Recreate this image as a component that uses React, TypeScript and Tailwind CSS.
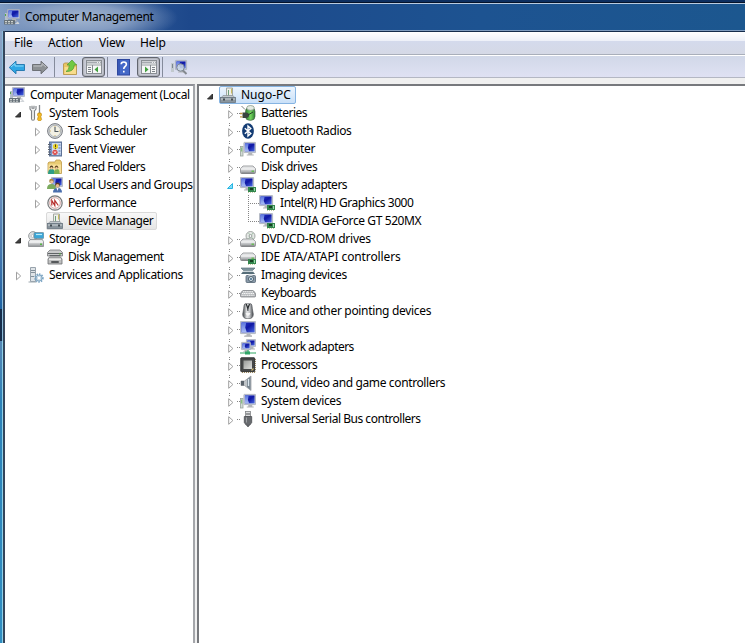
import React from "react";

type IconName =
  | "computer" | "tools" | "clock" | "event" | "folders" | "users" | "perf" | "device"
  | "storage" | "disk" | "services" | "battery" | "bluetooth" | "pc" | "drive" | "display"
  | "dvd" | "ide" | "imaging" | "keyboard" | "mouse" | "monitor" | "network" | "cpu"
  | "sound" | "usb";

function Gradients() {
  return (
    <svg className="absolute h-0 w-0">
      <defs>
        <linearGradient id="screen" x1="0" y1="0" x2="1" y2="1">
          <stop offset="0" stopColor="#2135c8" />
          <stop offset=".5" stopColor="#1018a4" />
          <stop offset="1" stopColor="#4a6be4" />
        </linearGradient>
        <linearGradient id="glare" x1="0" y1="0" x2="0" y2="1">
          <stop offset="0" stopColor="#5a74de" />
          <stop offset="1" stopColor="#a9bcf4" />
        </linearGradient>
        <linearGradient id="metal" x1="0" y1="0" x2="0" y2="1">
          <stop offset="0" stopColor="#eeeff0" />
          <stop offset=".5" stopColor="#cfd1d3" />
          <stop offset="1" stopColor="#909396" />
        </linearGradient>
        <linearGradient id="steel" x1="0" y1="0" x2="1" y2="0">
          <stop offset="0" stopColor="#3f4448" />
          <stop offset=".4" stopColor="#e8e9ea" />
          <stop offset=".65" stopColor="#c3c5c8" />
          <stop offset="1" stopColor="#44484c" />
        </linearGradient>
        <linearGradient id="die" x1="0" y1="0" x2="1" y2="1">
          <stop offset="0" stopColor="#989a98" />
          <stop offset="1" stopColor="#dedfdc" />
        </linearGradient>
        <linearGradient id="cell" x1="0" y1="0" x2="1" y2="0">
          <stop offset="0" stopColor="#2e8230" />
          <stop offset=".55" stopColor="#74d65e" />
          <stop offset="1" stopColor="#2b7b31" />
        </linearGradient>
      </defs>
    </svg>
  );
}

function Screen({ x = 0, y = 0, w = 13, h = 10 }: { x?: number; y?: number; w?: number; h?: number }) {
  return (
    <g>
      <rect x={x + 0.4} y={y + 0.4} width={w - 0.8} height={h - 0.8} rx=".5" fill="#d3d8e0" stroke="#a3a9b6" strokeWidth=".8" />
      <rect x={x + 1.4} y={y + 1.4} width={w - 2.8} height={h - 3} fill="url(#screen)" />
      <path d={`M${x + 1.4} ${y + 1.4}h${w * 0.3}l${-w * 0.06} ${h * 0.4}l${w * 0.1} ${h * 0.6 - 3}h${-w * 0.34}z`} fill="url(#glare)" />
      <path d={`M${x + w / 2 - 1.5} ${y + h}h4v1.500h1.500v1h-7v-1h1.500z`} fill="#b3b5b8" />
    </g>
  );
}

function Chip() {
  return (
    <g>
      <rect x="8" y="10" width="8" height="5" fill="#33864d" />
      <rect x="10" y="11" width="3" height="2" fill="#163f22" />
      <path d="M8 15.500h7" stroke="#c3cba6" strokeDasharray="1 1" />
      <path d="M14.500 11v3" stroke="#9fd9ab" />
    </g>
  );
}

function Drive({ y = 7 }: { y?: number }) {
  return (
    <g>
      <path d={`M3 ${y}h10l2.500 2.700v3.800q0 1-1 1h-13q-1 0-1-1v-3.800z`} fill="url(#metal)" stroke="#8b8d90" strokeWidth=".8" />
      <path d={`M1 ${y + 3}h14`} stroke="#fbfbfb" />
      <path d={`M1.500 ${y + 7.2}h13`} stroke="#7c7e80" />
      <rect x="11.500" y={y + 4.500} width="2.500" height="1.500" fill="#6aba58" />
    </g>
  );
}

function Icon({ name }: { name: IconName }) {
  const art: Record<IconName, React.ReactNode> = {
    computer: (
      <>
        <rect x="1" y="4" width="3" height="7" fill="#b5c0cb" />
        <path d="M1.500 5v2" stroke="#58a847" />
        <Screen x={3} y={0} w={13} h={10} />
        <rect x="0" y="11" width="11" height="4.500" rx=".5" fill="#68727a" />
        <path d="M1 12.500h9M1 14.200h9" stroke="#cdd3d0" strokeDasharray="2 1" />
        <path d="M11 14.500l3-2 1.500 2.500h-4z" fill="#d1d5d9" />
      </>
    ),
    tools: (
      <>
        <path d="M2 1v3l1.500 2v7.500q0 1.800 1.500 1.800t1.500-1.800V6L8 4V1M4 .8v2.500h2V.8" fill="none" stroke="#7d8185" strokeWidth="1.100" />
        <path d="M4.200 4.500h1.600v9H4.200z" fill="#dfe1e2" />
        <path d="M11.500 0v8" stroke="#85898c" strokeWidth="1.300" />
        <path d="M10 8h3l.6 2-.8 1.500.8 3-1 1.200h-2.200l-1-1.200.8-3-.8-1.500z" fill="#f5bb25" stroke="#b5820d" strokeWidth=".6" />
      </>
    ),
    clock: (
      <>
        <circle cx="8" cy="8" r="7.400" fill="#d6d7d8" stroke="#787c82" strokeWidth="1" />
        <circle cx="8" cy="8" r="5.700" fill="#f3f1e4" stroke="#a5adb5" strokeWidth=".8" />
        <path d="M8 4V8.500h3.500" stroke="#4e5860" fill="none" strokeWidth="1.100" />
        <path d="M8 2.800v1M8 12.200v1M2.800 8h1M12.200 8h1" stroke="#c9a75c" />
      </>
    ),
    event: (
      <>
        <rect x="2.500" y="1" width="12" height="14" fill="#7695c4" stroke="#5e7295" />
        <rect x="5" y="2" width="9" height="12" fill="#ccdaf0" />
        <path d="M1 3.500h3M1 6h3M1 8.500h3M1 11h3M1 13.500h3" stroke="#59616f" />
        <path d="M8.500 2.500l2.500 1.500v3l-2.500 1.500L6 7V4z" fill="#e7d32f" />
        <path d="M8.500 3.500v2.500M8.500 6.800v1" stroke="#57430f" />
        <circle cx="8" cy="11.300" r="2.600" fill="#db4a48" />
        <path d="M7 10.300l2 2M9 10.300l-2 2" stroke="white" strokeWidth=".8" />
        <path d="M11.500 4h2M11.500 7h2M11.500 10h2M11.500 13h2" stroke="#5674af" />
      </>
    ),
    folders: (
      <>
        <path d="M1 4l1-1h6l1-2h4l1.500 2v11.500H1z" fill="#e9cc74" stroke="#bf9b49" strokeWidth=".8" />
        <path d="M1.500 5.500h12.500v8.500h-12.500z" fill="#f8e09a" />
        <circle cx="4.500" cy="8.200" r="1.700" fill="#553f24" />
        <circle cx="9.500" cy="8.200" r="1.700" fill="#684c25" />
        <path d="M1 15q0-5 3.500-5t3.500 5z" fill="#2e9c86" />
        <path d="M7 15q0-5 3-5t2.500 5z" fill="#7fb050" />
        <circle cx="4.500" cy="9.200" r="1.200" fill="#efc79b" />
        <circle cx="9.500" cy="9.200" r="1.200" fill="#efc79b" />
      </>
    ),
    users: (
      <>
        <Screen x={4} y={0} w={12} h={10} />
        <circle cx="4.500" cy="4" r="2.300" fill="#a98344" />
        <circle cx="4.700" cy="5" r="1.600" fill="#efc79d" />
        <path d="M0 12q0-5 4.500-5t4.500 5z" fill="#7cab5e" />
        <circle cx="10.500" cy="7.800" r="2.400" fill="#593b29" />
        <circle cx="10.500" cy="8.800" r="1.700" fill="#e7b98d" />
        <path d="M6 15.500q0-4.500 4.500-4.500t4.500 4.500z" fill="#4b6fae" />
        <path d="M9.500 11l1 3 1-3" fill="white" />
      </>
    ),
    perf: (
      <>
        <circle cx="8" cy="8" r="7.200" fill="#f1eeee" stroke="#77797b" strokeWidth="1.200" />
        <circle cx="8" cy="8" r="5.300" fill="white" stroke="#cc9794" strokeWidth=".8" />
        <path d="M4.800 10.500V5.500l3 5V5.500l3.500 5" stroke="#b62e2c" fill="none" strokeWidth="1.200" />
      </>
    ),
    device: (
      <>
        <path d="M6.500 1h6v8h-6z" fill="#efefea" stroke="#a2a7a1" />
        <path d="M8.500 3v6" stroke="#6e9f7c" />
        <path d="M11.500 1.500v5" stroke="#cbbd62" />
        <path d="M3 8.500h10l2 2.500H1z" fill="#c3c9cd" stroke="#8b939a" strokeWidth=".7" />
        <rect x=".5" y="10.500" width="15" height="5" fill="#8a959d" stroke="#697580" strokeWidth=".8" />
        <path d="M1 12h14" stroke="#cdd4d8" />
        <rect x="3" y="11.500" width="2" height="2" fill="#454e55" />
        <rect x="11" y="11.500" width="2" height="2" fill="#454e55" />
      </>
    ),
    storage: (
      <>
        <circle cx="5" cy="5" r="4.400" fill="#dddfe0" stroke="#94989b" strokeWidth=".9" />
        <circle cx="4.500" cy="5" r="1.400" fill="white" stroke="#a4a8ab" strokeWidth=".6" />
        <rect x="6" y="1.500" width="9.800" height="6" rx="1" fill="#3ba5d6" stroke="#6e8794" strokeWidth=".7" />
        <path d="M8 3.500h6" stroke="#b9ecfa" strokeWidth="1.200" />
        <path d="M2 8.500h12.500l1 2.500v4.500H.5V11z" fill="url(#metal)" stroke="#868a8e" strokeWidth=".8" />
        <path d="M1 11h14" stroke="white" />
        <rect x="12" y="12.500" width="2" height="1.500" fill="#57b544" />
      </>
    ),
    disk: (
      <>
        <path d="M3 1h10l2.500 2.500V7h-15V3.500z" fill="#c9cacb" stroke="#77797b" strokeWidth=".8" />
        <path d="M1 4.500h14M2.500 6.500h11" stroke="#606467" />
        <path d="M2.500 8h11l1.500 2v5H1v-5z" fill="#bebfbf" stroke="#6d7072" strokeWidth=".8" />
        <path d="M2 10.200h12" stroke="white" />
        <rect x="4" y="12" width="8" height="2" rx="1" fill="#56595b" />
        <path d="M12 5h2" stroke="#58af46" />
      </>
    ),
    services: (
      <>
        <path d="M2.500.500h5v14h-5z" fill="#dfe4e8" stroke="#98a3ac" />
        <path d="M3 3.500h4M3 5.500h4M3 9.500h3" stroke="#84919b" />
        <path d="M.5 15h8" stroke="#9ca7ae" />
        <circle cx="11" cy="11" r="3.800" fill="none" stroke="#7ba5c4" strokeWidth="1.800" strokeDasharray="1.500 1" />
        <circle cx="11" cy="11" r="3" fill="#c9dbe8" stroke="#779fbc" strokeWidth=".8" />
        <circle cx="11" cy="11" r="1.200" fill="white" />
      </>
    ),
    battery: (
      <>
        <rect x="5.500" y="2.500" width="9.500" height="12.800" rx="4" fill="url(#cell)" stroke="#47664b" strokeWidth=".7" />
        <ellipse cx="10.500" cy="2.900" rx="3.800" ry="2.400" fill="#e4ece2" stroke="#7d8f80" strokeWidth=".7" />
        <path d="M2.500 7.500h3.500q3 0 3 2.700t-3 2.800h-3.500z" fill="#3a443f" />
        <path d="M0 8.500h2.500M0 11.800h2.500" stroke="#c09a46" strokeWidth="1.300" />
        <path d="M1.500 1l3.500 3.500" stroke="#7b827f" />
        <path d="M8 10l5-3" stroke="#273c2b" />
      </>
    ),
    bluetooth: (
      <>
        <ellipse cx="8" cy="8" rx="5.900" ry="7.800" fill="#143c74" />
        <path d="M4.800 5.300l6 5.300L8 13V3l2.800 2.400-6 5.300" stroke="white" fill="none" strokeWidth="1.400" />
      </>
    ),
    pc: (
      <>
        <rect x=".5" y="5.500" width="2.500" height="9.500" fill="#d3dbd6" stroke="#98a39d" strokeWidth=".8" />
        <path d="M1.700 6.500v4" stroke="#76bd6d" />
        <Screen x={3.5} y={1} w={12.500} h={11} />
      </>
    ),
    drive: <Drive />,
    display: (
      <>
        <Screen x={0} y={0} w={14} h={11} />
        <Chip />
      </>
    ),
    dvd: (
      <>
        <circle cx="10.500" cy="5" r="4.500" fill="#e4e8e5" stroke="#8e9491" strokeWidth=".8" />
        <path d="M8.500 2l4.500 6M13 2l-4.500 6" stroke="#96bd9c" strokeWidth=".8" />
        <circle cx="10.500" cy="5" r="1.400" fill="white" stroke="#7d8382" strokeWidth=".7" />
        <Drive y={8} />
      </>
    ),
    ide: (
      <>
        <Drive y={4} />
        <Chip />
      </>
    ),
    imaging: (
      <>
        <path d="M1 1h14l-3 3H4z" fill="#7d929c" stroke="#60747e" strokeWidth=".7" />
        <path d="M3 4.500h10l2 2.500H1z" fill="#566d78" />
        <path d="M3 4.300h10" stroke="#dbe3e7" />
        <rect x="6" y="8.500" width="9.500" height="7" rx="1" fill="#8b9baa" stroke="#566675" strokeWidth=".8" />
        <path d="M8.500 7.500h4v2h-4z" fill="#c3cdd4" />
        <circle cx="11" cy="12" r="2.500" fill="#dce8f0" stroke="#40515f" strokeWidth=".9" />
        <circle cx="11" cy="12" r="1" fill="#3e6685" />
      </>
    ),
    keyboard: (
      <>
        <path d="M3 5.500h10q3 1.500 2.700 5.500-.2 1-1.200 1h-13q-1 0-1.200-1Q0 7 3 5.500z" fill="#b1b4b7" stroke="#787b7f" strokeWidth=".7" />
        <path d="M3 6.800h10M2 8.500h12M1.500 10.200h13" stroke="#f7f7f7" strokeWidth="1.100" strokeDasharray="1.300 .5" />
      </>
    ),
    mouse: (
      <>
        <path d="M5 .8h6q1 0 1.300 5l1 5.500q0 4.500-5.300 4.500t-5.300-4.500l1-5.500Q4 .8 5 .8z" fill="url(#steel)" stroke="#54585c" strokeWidth=".7" />
        <path d="M6.300 1l1.500 4.500L9.500 1" fill="#dfe2e3" stroke="#25292c" strokeWidth="1.200" />
        <path d="M7.900 5v3" stroke="#3c4145" />
        <path d="M5.500 10q2.500 6 5 0" fill="#f6f6f6" />
      </>
    ),
    monitor: (
      <>
        <Screen x={0} y={0} w={16} h={13} />
        <path d="M4 15.200h8" stroke="#b1b3b6" />
      </>
    ),
    network: (
      <>
        <Screen x={6} y={0} w={10} h={8} />
        <Screen x={1} y={3} w={10} h={8} />
        <path d="M8 11v3" stroke="#55bb84" strokeWidth="1.500" />
        <path d="M0 14h16" stroke="#8ccfa9" strokeWidth="1.800" />
        <rect x="5" y="12.500" width="5" height="3" fill="#2fa567" />
      </>
    ),
    cpu: (
      <>
        <path d="M15.300 2v12.500M2 15.500h13" stroke="#a38d61" strokeWidth="1.300" strokeDasharray="1 1" />
        <rect x=".8" y=".8" width="13.800" height="13.800" rx=".5" fill="#454748" stroke="#333536" />
        <rect x="3.500" y="3.500" width="8.500" height="8.500" fill="url(#die)" />
        <path d="M11.500 13.500l2-2" stroke="#c5b16f" strokeWidth="1.200" />
      </>
    ),
    sound: (
      <>
        <path d="M1 6h3.500L11 1v14.500L4.500 10.500H1z" fill="#bfc4c8" stroke="#92979b" strokeWidth=".7" />
        <path d="M1 6h3v4.500H1z" fill="#5a636b" />
        <path d="M7 4.500v7.500l3.500 3V1.500z" fill="#788590" />
        <path d="M8.500 4v7" stroke="#dbe6ee" strokeWidth="1.300" />
      </>
    ),
    usb: (
      <>
        <rect x="5.500" y=".5" width="5" height="5" fill="#dcddde" stroke="#808386" strokeWidth=".8" />
        <path d="M7 2v2M9 2v2" stroke="#424548" strokeWidth=".9" />
        <path d="M4.300 5.500h7.400v6l-2 2.800H6.300l-2-2.800z" fill="#686b6f" stroke="#4b4e52" strokeWidth=".8" />
        <path d="M6.500 6.500v5" stroke="#9fa2a5" />
        <path d="M8 14v2" stroke="#55585c" strokeWidth="1.600" />
      </>
    ),
  };
  return (
    <svg className="h-4 w-4 shrink-0" viewBox="0 0 16 16">
      {art[name]}
    </svg>
  );
}

function Arrow({ open }: { open?: boolean }) {
  return (
    <svg className="h-2.5 w-2.5 shrink-0" viewBox="0 0 10 10">
      {open ? (
        <path d="M6.500 3v5H1.500z" fill="#404040" stroke="#262626" strokeWidth=".9" />
      ) : (
        <path d="M2.500 1.200v7.600L6.700 5z" fill="white" stroke="#a0a0a0" />
      )}
    </svg>
  );
}

interface Node {
  label: string;
  icon: IconName;
  level: number;
  state?: "open" | "closed";
  tracking: string;
}

const leftNodes: Node[] = [
  { label: "Computer Management (Local", icon: "computer", level: 0, tracking: "tracking-[-0.46px]" },
  { label: "System Tools", icon: "tools", level: 1, state: "open", tracking: "tracking-[-0.27px]" },
  { label: "Task Scheduler", icon: "clock", level: 2, state: "closed", tracking: "tracking-[-0.36px]" },
  { label: "Event Viewer", icon: "event", level: 2, state: "closed", tracking: "tracking-[-0.44px]" },
  { label: "Shared Folders", icon: "folders", level: 2, state: "closed", tracking: "tracking-[-0.5px]" },
  { label: "Local Users and Groups", icon: "users", level: 2, state: "closed", tracking: "tracking-[-0.4px]" },
  { label: "Performance", icon: "perf", level: 2, state: "closed", tracking: "tracking-[-0.45px]" },
  { label: "Device Manager", icon: "device", level: 2, tracking: "tracking-[-0.4px]" },
  { label: "Storage", icon: "storage", level: 1, state: "open", tracking: "tracking-[-0.4px]" },
  { label: "Disk Management", icon: "disk", level: 2, tracking: "tracking-[-0.47px]" },
  { label: "Services and Applications", icon: "services", level: 1, state: "closed", tracking: "tracking-[-0.34px]" },
];

const rightNodes: Node[] = [
  { label: "Batteries", icon: "battery", level: 1, state: "closed", tracking: "tracking-[-0.5px]" },
  { label: "Bluetooth Radios", icon: "bluetooth", level: 1, state: "closed", tracking: "tracking-[-0.38px]" },
  { label: "Computer", icon: "pc", level: 1, state: "closed", tracking: "tracking-[-0.35px]" },
  { label: "Disk drives", icon: "drive", level: 1, state: "closed", tracking: "tracking-[-0.45px]" },
  { label: "Display adapters", icon: "display", level: 1, state: "open", tracking: "tracking-[-0.5px]" },
  { label: "Intel(R) HD Graphics 3000", icon: "display", level: 2, tracking: "tracking-[-0.44px]" },
  { label: "NVIDIA GeForce GT 520MX", icon: "display", level: 2, tracking: "tracking-[-0.4px]" },
  { label: "DVD/CD-ROM drives", icon: "dvd", level: 1, state: "closed", tracking: "tracking-[-0.26px]" },
  { label: "IDE ATA/ATAPI controllers", icon: "ide", level: 1, state: "closed", tracking: "tracking-[-0.12px]" },
  { label: "Imaging devices", icon: "imaging", level: 1, state: "closed", tracking: "tracking-[-0.4px]" },
  { label: "Keyboards", icon: "keyboard", level: 1, state: "closed", tracking: "tracking-[-0.46px]" },
  { label: "Mice and other pointing devices", icon: "mouse", level: 1, state: "closed", tracking: "tracking-[-0.32px]" },
  { label: "Monitors", icon: "monitor", level: 1, state: "closed", tracking: "tracking-[-0.4px]" },
  { label: "Network adapters", icon: "network", level: 1, state: "closed", tracking: "tracking-[-0.54px]" },
  { label: "Processors", icon: "cpu", level: 1, state: "closed", tracking: "tracking-[-0.5px]" },
  { label: "Sound, video and game controllers", icon: "sound", level: 1, state: "closed", tracking: "tracking-[-0.37px]" },
  { label: "System devices", icon: "pc", level: 1, state: "closed", tracking: "tracking-[-0.37px]" },
  { label: "Universal Serial Bus controllers", icon: "usb", level: 1, state: "closed", tracking: "tracking-[-0.47px]" },
];

function LeftRow({ node }: { node: Node }) {
  const selected = node.label === "Device Manager";
  const indent = node.level === 0 ? "pl-[3px]" : node.level === 1 ? "pl-2" : "pl-[27px]";
  return (
    <div className={`flex h-[18px] items-center ${indent}`}>
      {node.level > 0 && (
        <span className="flex w-[14px] shrink-0 items-center pt-px">
          {node.state && <span className="ml-[1px] flex"><Arrow open={node.state === "open"} /></span>}
        </span>
      )}
      <div
        className={`flex h-[18px] items-center gap-[5px] border ${
          selected ? "rounded-[2px] border-[#d9d9d9] bg-linear-to-b from-[#f8f8f8] to-[#e5e5e5] pr-[3px]" : "border-transparent"
        }`}
      >
        <Icon name={node.icon} />
        <span className={`whitespace-nowrap leading-4 ${node.tracking}`}>{node.label}</span>
      </div>
    </div>
  );
}

function Guide({ node }: { node: Node }) {
  if (node.level === 2) {
    const last = node.label.startsWith("NVIDIA");
    return (
      <svg className="h-[18px] w-[50px] shrink-0" viewBox="0 0 50 18">
        <path d="M20.500 1v17" stroke="#858585" strokeDasharray="1 1" />
        <path d={last ? "M39.500 1v9" : "M39.500 1v17"} stroke="#858585" strokeDasharray="1 1" />
        <path d="M41 9.500h9" stroke="#858585" strokeDasharray="1 1" />
      </svg>
    );
  }
  return (
    <svg className="h-[18px] w-[31px] shrink-0" viewBox="0 0 31 18">
      <path d="M20.500 1v1M20.500 3v1" stroke="#858585" />
      <path d="M28 9.500h3" stroke="#858585" strokeDasharray="1 1" />
      {node.state === "open" ? (
        <path d="M23.500 7.500v5h-5z" fill="#82dcf8" stroke="#27b5e2" />
      ) : (
        <path d="M19.700 6.700v7.600l4.200-3.800z" fill="white" stroke="#a0a0a0" />
      )}
    </svg>
  );
}

function ToolIcon({ kind }: { kind: "back" | "forward" | "up" | "tree" | "help" | "pane" | "scan" }) {
  return (
    <svg className="h-[18px] w-[18px]" viewBox="0 0 18 18">
      {(kind === "back" || kind === "forward") && (
        <g transform={kind === "forward" ? "translate(18 0) scale(-1 1)" : undefined}>
          <path
            d="M1.200 9.500l6.800-6.300v3.300h8.500v6H8v3.300z"
            fill={kind === "back" ? "#2fa6e4" : "#8c9094"}
            stroke={kind === "back" ? "#1f74ad" : "#66696e"}
            strokeWidth=".9"
            strokeLinejoin="round"
          />
          <path d="M3 9l4-3.500V8h8.500" stroke={kind === "back" ? "#90dcfa" : "#bfc2c5"} fill="none" />
        </g>
      )}
      {kind === "up" && (
        <>
          <path d="M2.500 6l1-1h4l1.500 1.500h6.500v10h-13z" fill="#eac465" stroke="#b8964c" strokeWidth=".9" />
          <path d="M3.500 9h11.500v7H3.500z" fill="#f7dc8c" />
          <path d="M5 13.500q3.500-1.500 3.300-6.500H6l5-5 4.500 5h-2.200q-.3 7-8.300 6.500z" fill="#72c944" stroke="#4a9a32" strokeWidth=".7" />
        </>
      )}
      {(kind === "tree" || kind === "pane") && (
        <>
          <rect x="1.500" y="2.500" width="15" height="13" fill="#f6f7f7" stroke="#8a8f94" />
          <path d="M2 4.500h14" stroke="#a4a9ae" strokeWidth="2" />
          <path d="M12 4.500h4" stroke="#eef0f2" strokeDasharray="1 1" />
          <path d="M2 7h14" stroke="#7f858a" strokeWidth=".8" />
          <path d={kind === "tree" ? "M7.500 7v8" : "M10.500 7v8"} stroke="#868c91" />
          <path d={kind === "tree" ? "M3 9.500h3M3 11.500h3M3 13.500h3" : "M12 9.500h3M12 11.500h3M12 13.500h3"} stroke="#7e848a" />
          <path d={kind === "tree" ? "M13 8.500v6l-3.500-3z" : "M5 8.500v6l3.500-3z"} fill="#3fa03c" />
        </>
      )}
      {kind === "help" && (
        <>
          <rect x="3.500" y="1.500" width="12" height="15.500" fill="#4468c8" stroke="#2e479e" />
          <path d="M5 2v15" stroke="#2c48a6" />
          <path d="M7.200 6.300q0-2.300 2.600-2.300t2.600 2.300q0 1.300-1.300 2.200T9.800 11M9.800 12.800v1.800" stroke="white" strokeWidth="1.600" fill="none" />
        </>
      )}
      {kind === "scan" && (
        <>
          <rect x="0" y="5" width="3" height="9" fill="#c2c9ce" />
          <path d="M1.500 6v4" stroke="#7b8690" />
          <Screen x={4} y={2} w={12} h={10} />
          <path d="M11.500 12l4 4" stroke="#84898f" strokeWidth="2" />
          <circle cx="9.500" cy="9.500" r="3.700" fill="#cbd9e6" fillOpacity=".85" stroke="#818a95" />
        </>
      )}
    </svg>
  );
}

function Sep() {
  return <span className="h-5 w-px bg-[#858b9b]" />;
}

export default function App() {
  return (
    <div className="flex h-[643px] w-[745px] flex-col overflow-hidden bg-[#1e4f8b] font-['Noto_Sans','Liberation_Sans',sans-serif] text-[12px] text-black">
      <Gradients />
      <div className="h-[3px] shrink-0 border-b border-[#061329] bg-[#0d2f60]" />
      <header className="flex h-[28px] shrink-0 items-center border-y border-t-[#b9cbe0] border-b-[#7e9bbe] bg-[radial-gradient(ellipse_100px_26px_at_78px_14px,#a3b6d0_0%,#859dc2_50%,transparent_100%),linear-gradient(90deg,#7f9cc4_0,#3b639f_60px,#1d488b_190px,#1d5391_480px,#1c578f_745px)] pl-1">
        <Icon name="computer" />
        <h1 className="ml-[5px] whitespace-nowrap text-[12px] leading-4 tracking-[-0.38px]">Computer Management</h1>
      </header>
      <div className="flex min-h-0 flex-1">
        <div className="w-[5px] shrink-0 border-r-2 border-[#34455b] bg-[#3296c6]">
          <div className="h-[278px] border-r border-[#8bbbd9] bg-linear-to-b from-[#8aa3c6] via-[#6d8fbc] via-55% to-[#1c62a3]" />
          <div className="h-[32px] border-r border-[#8bbbd9] bg-[#152d4b]" />
          <div className="h-[302px] border-r border-[#8fd0e7] bg-linear-to-b from-[#5587b5] via-[#2c82b9] via-20% to-[#318fc3]" />
        </div>
        <div className="flex min-w-0 flex-1 flex-col border-t border-[#152c4b] bg-[#f0f0f0]">
          <nav className="flex h-[23px] shrink-0 items-center border-b border-[#a9afba] bg-[linear-gradient(#ffffff,#edf0f8_9px,#d4daec_9px,#d5d9e6)] pl-[9px] tracking-[-0.1px]">
            <span className="w-[34px]">File</span>
            <span className="w-[51px]">Action</span>
            <span className="w-[41px]">View</span>
            <span>Help</span>
          </nav>
          <div className="flex h-[23px] shrink-0 items-center border-y border-t-white border-b-[#b4b7c3] bg-linear-to-b from-[#d1d8e8] to-[#dfe1f3] pl-[3px]">
            <ToolIcon kind="back" />
            <span className="ml-[5px] flex"><ToolIcon kind="forward" /></span>
            <span className="mr-[6px] ml-[5px] flex"><Sep /></span>
            <ToolIcon kind="up" />
            <span className="mr-[2px] ml-[3px] flex h-5 w-[23px] items-center justify-center rounded-[3px] border border-[#62666f] bg-[#c9ccd7] shadow-[inset_0_0_2px_#777]"><ToolIcon kind="tree" /></span>
            <Sep />
            <span className="mr-[5px] ml-[6px] flex"><ToolIcon kind="help" /></span>
            <span className="mr-[2px] flex h-5 w-[23px] items-center justify-center rounded-[3px] border border-[#62666f] bg-[#c9ccd7] shadow-[inset_0_0_2px_#777]"><ToolIcon kind="pane" /></span>
            <Sep />
            <span className="ml-[8px] flex"><ToolIcon kind="scan" /></span>
          </div>
          <main className="mt-[6px] flex min-h-0 flex-1 gap-[2px]">
            <aside className="w-[190px] shrink-0 overflow-hidden border-t-2 border-r-2 border-t-[#8e9096] border-r-[#a4a6aa] bg-white">
              {leftNodes.map((n) => <LeftRow key={n.label} node={n} />)}
            </aside>
            <section className="min-w-0 flex-1 border-t-2 border-l-2 border-[#77797d] bg-white pl-[10px]">
              <div className="flex h-[18px] items-center">
                <span className="-ml-[3px] flex w-[13px] pt-px"><Arrow open /></span>
                <div className="flex h-[18px] w-[77px] items-center gap-[5px] rounded-[2px] border border-[#86b4e2] bg-linear-to-b from-[#edf5fd] to-[#c9e0f8]">
                  <Icon name="device" />
                  <span className="leading-4">Nugo-PC</span>
                </div>
              </div>
              {rightNodes.map((n) => (
                <div key={n.label} className="flex h-[18px] items-center">
                  <Guide node={n} />
                  <Icon name={n.icon} />
                  <span className={`ml-[5px] whitespace-nowrap leading-4 ${n.tracking}`}>{n.label}</span>
                </div>
              ))}
            </section>
          </main>
        </div>
      </div>
    </div>
  );
}
